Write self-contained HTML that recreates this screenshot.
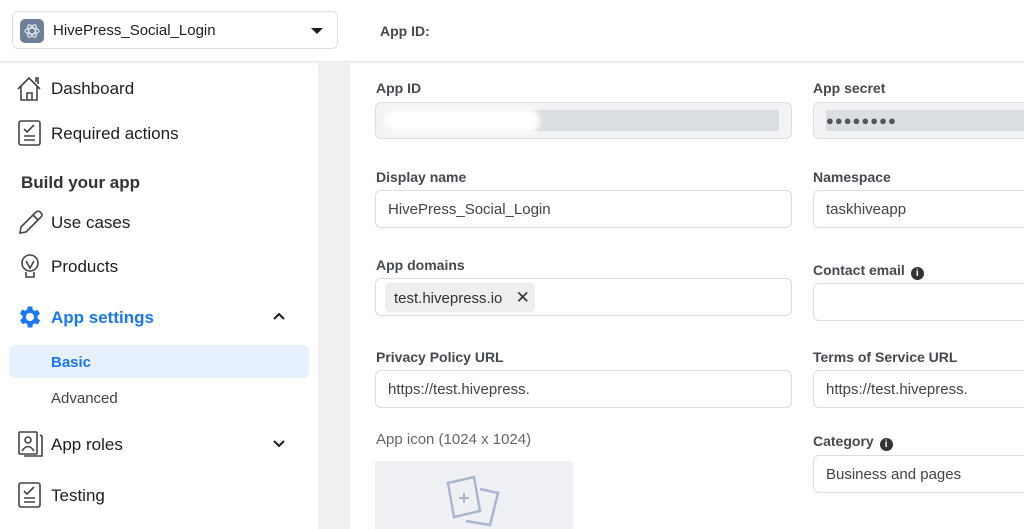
<!DOCTYPE html>
<html><head><meta charset="utf-8"><style>
*{margin:0;padding:0;box-sizing:border-box}
body{width:1024px;height:529px;overflow:hidden;background:#fff;font-family:"Liberation Sans",Arial,sans-serif;color:#1c1e21;position:relative}
.a{position:absolute}
.top{left:0;top:0;width:1024px;height:62px;background:#fff;border-bottom:1px solid #e4e6eb;box-shadow:0 1px 3px rgba(0,0,0,.06)}
.sel{left:12px;top:11px;width:326px;height:38px;border:1px solid #dddfe2;border-radius:6px;background:#fff}
.nav{font-size:17px;color:#1c1e21;left:51px}
.gray{left:318px;top:63px;width:32px;height:466px;background:#f0f0f0}
.lbl{font-size:14px;font-weight:bold;color:#444950}
.inp{height:38px;border:1px solid #dadde1;border-radius:6px;background:#fff;font-size:15px;color:#444;padding:0 12px;line-height:38px;white-space:nowrap;overflow:hidden}
.i{display:inline-block;width:13px;height:13px;border-radius:50%;background:#333;color:#fff;font-size:10px;text-align:center;line-height:13px;vertical-align:-1px;margin-left:2px}
</style></head><body>
<div class="a top"></div>
<div class="a sel">
 <div class="a" style="left:7px;top:7px;width:24px;height:24px;border-radius:5px;background:#6e7f99">
  <svg width="24" height="24" viewBox="0 0 24 24"><g fill="none" stroke="#dfe5ee" stroke-width="1.2"><ellipse cx="12" cy="12" rx="7" ry="3"/><ellipse cx="12" cy="12" rx="7" ry="3" transform="rotate(60 12 12)"/><ellipse cx="12" cy="12" rx="7" ry="3" transform="rotate(120 12 12)"/></g></svg>
 </div>
 <div class="a" style="left:40px;top:10px;font-size:15px;color:#1c1e21">HivePress_Social_Login</div>
 <div class="a" style="left:298px;top:16px;width:0;height:0;border-left:6px solid transparent;border-right:6px solid transparent;border-top:6px solid #1c1e21"></div>
</div>
<div class="a" style="left:380px;top:23px;font-size:14px;font-weight:bold;color:#444950">App ID:</div>

<svg class="a" style="left:16px;top:75px" width="28" height="28" viewBox="0 0 28 28" fill="none" stroke="#444" stroke-width="1.6"><path d="M2 14 L13 3 L24 14 M5 11 V25 H21 V11 M11 25 V18 H16 V25 M20 7 V3 H22 V9"/></svg>
<div class="a nav" style="top:79px">Dashboard</div>
<svg class="a" style="left:18px;top:119px" width="24" height="28" viewBox="0 0 24 28" fill="none" stroke="#444" stroke-width="1.6"><rect x="1" y="2" width="21" height="24" rx="2"/><path d="M6 10 L9 13 L16 6 M6 17 H17 M6 21 H17"/></svg>
<div class="a nav" style="top:124px">Required actions</div>
<div class="a" style="left:21px;top:173px;font-size:17px;font-weight:bold;color:#333">Build your app</div>
<svg class="a" style="left:17px;top:208px" width="28" height="28" viewBox="0 0 28 28" fill="none" stroke="#444" stroke-width="1.6"><path d="M3 25 L4 19 L19 4 Q22 2 24 5 Q26 7 24 9 L9 24 Z M16 7 L21 12"/></svg>
<div class="a nav" style="top:213px">Use cases</div>
<svg class="a" style="left:19px;top:253px" width="24" height="28" viewBox="0 0 24 28" fill="none" stroke="#444" stroke-width="1.6"><circle cx="11" cy="10" r="8"/><path d="M7 8 L11 15 L15 8 M7 19 V24 H15 V19"/></svg>
<div class="a nav" style="top:257px">Products</div>
<svg class="a" style="left:16px;top:303px" width="28" height="28" viewBox="0 0 24 24"><path fill="#1877f2" d="M19.4 13a7.5 7.5 0 0 0 0-2l2.1-1.6-2-3.5-2.5 1a7 7 0 0 0-1.7-1L15 3h-4l-.4 2.6a7 7 0 0 0-1.7 1l-2.5-1-2 3.5L6.6 11a7.5 7.5 0 0 0 0 2l-2.1 1.6 2 3.5 2.5-1a7 7 0 0 0 1.7 1L11 21h4l.4-2.6a7 7 0 0 0 1.7-1l2.5 1 2-3.5zM13 15.5a3.5 3.5 0 1 1 0-7 3.5 3.5 0 0 1 0 7z" transform="translate(-1 0)"/></svg>
<div class="a" style="left:51px;top:308px;font-size:17px;font-weight:bold;color:#1877f2">App settings</div>
<svg class="a" style="left:272px;top:311px" width="14" height="10" viewBox="0 0 14 10"><path d="M2 8 L7 3 L12 8" fill="none" stroke="#1c1e21" stroke-width="2"/></svg>
<div class="a" style="left:9px;top:345px;width:300px;height:33px;border-radius:6px;background:#e7f0fd"></div>
<div class="a" style="left:51px;top:354px;font-size:15px;font-weight:bold;color:#1877f2">Basic</div>
<div class="a" style="left:51px;top:390px;font-size:15px;color:#444">Advanced</div>
<svg class="a" style="left:17px;top:430px" width="28" height="28" viewBox="0 0 28 28" fill="none" stroke="#444" stroke-width="1.6"><rect x="2" y="2" width="18" height="22" rx="1"/><path d="M23 5 L25 6 V26 H7"/><circle cx="11" cy="10" r="3"/><path d="M5 21 Q11 12 17 21"/></svg>
<div class="a nav" style="top:435px">App roles</div>
<svg class="a" style="left:272px;top:439px" width="14" height="10" viewBox="0 0 14 10"><path d="M2 2 L7 7 L12 2" fill="none" stroke="#1c1e21" stroke-width="2"/></svg>
<svg class="a" style="left:18px;top:481px" width="24" height="28" viewBox="0 0 24 28" fill="none" stroke="#444" stroke-width="1.6"><rect x="1" y="2" width="21" height="24" rx="2"/><path d="M6 10 L9 13 L16 6 M6 17 H17 M6 21 H17"/></svg>
<div class="a nav" style="top:486px">Testing</div>

<div class="a gray"></div>

<div class="a lbl" style="left:376px;top:80px">App ID</div>
<div class="a" style="left:375px;top:102px;width:417px;height:37px;border:1px solid #dadde1;border-radius:6px;background:#f2f3f5"></div>
<div class="a" style="left:388px;top:110px;width:391px;height:21px;background:#dadde1"></div>
<div class="a" style="left:384px;top:108px;width:156px;height:25px;background:#fff;border-radius:12px;filter:blur(3px)"></div>
<div class="a lbl" style="left:813px;top:80px">App secret</div>
<div class="a" style="left:813px;top:102px;width:230px;height:37px;border:1px solid #dadde1;border-radius:6px;background:#f2f3f5"></div>
<div class="a" style="left:826px;top:110px;width:200px;height:21px;background:#dadde1;font-size:13px;color:#555;line-height:21px;letter-spacing:1px">●●●●●●●●</div>

<div class="a lbl" style="left:376px;top:169px">Display name</div>
<div class="a inp" style="left:375px;top:190px;width:417px">HivePress_Social_Login</div>
<div class="a lbl" style="left:813px;top:169px">Namespace</div>
<div class="a inp" style="left:813px;top:190px;width:230px">taskhiveapp</div>

<div class="a lbl" style="left:376px;top:257px">App domains</div>
<div class="a inp" style="left:375px;top:278px;width:417px"></div>
<div class="a" style="left:385px;top:283px;width:150px;height:29px;background:#eceef0;border-radius:4px;font-size:15px;color:#333;line-height:29px;padding-left:9px">test.hivepress.io <span style="margin-left:9px;font-size:17px">✕</span></div>
<div class="a lbl" style="left:813px;top:262px">Contact email <span class="i">i</span></div>
<div class="a inp" style="left:813px;top:283px;width:230px"></div>

<div class="a lbl" style="left:376px;top:349px">Privacy Policy URL</div>
<div class="a inp" style="left:375px;top:370px;width:417px">https://test.hivepress.</div>
<div class="a lbl" style="left:813px;top:349px">Terms of Service URL</div>
<div class="a inp" style="left:813px;top:370px;width:230px">https://test.hivepress.</div>

<div class="a" style="left:376px;top:431px;font-size:15px;color:#606770">App icon (1024 x 1024)</div>
<div class="a" style="left:375px;top:461px;width:198px;height:68px;background:#eef0f4"></div>
<svg class="a" style="left:444px;top:475px" width="60" height="54" viewBox="0 0 60 54" fill="none" stroke="#a9b6d0" stroke-width="2.5"><path d="M4 8 L30 2 L36 36 L10 42 Z"/><path d="M36 14 L54 18 L46 50 L22 46"/><path d="M20 18 V28 M15 23 H25" stroke-width="2"/></svg>
<div class="a lbl" style="left:813px;top:433px">Category <span class="i">i</span></div>
<div class="a inp" style="left:813px;top:455px;width:230px">Business and pages</div>
</body></html>
